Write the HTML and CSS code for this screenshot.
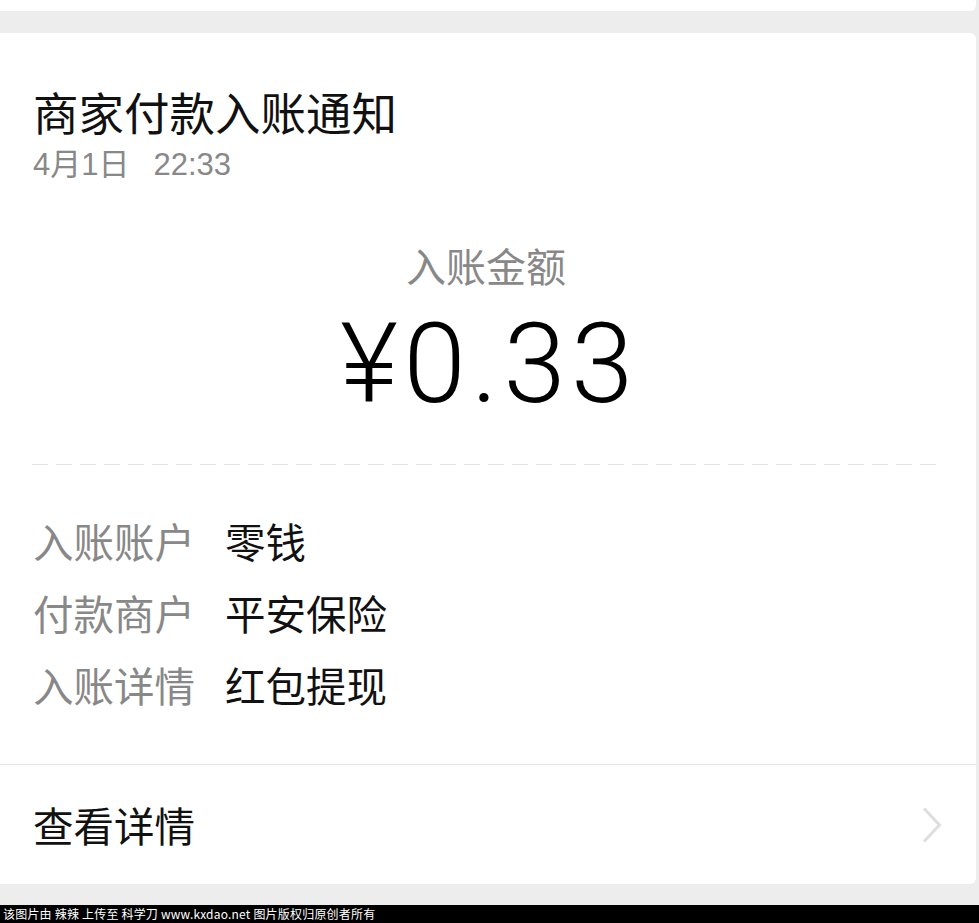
FILE: index.html
```html
<!DOCTYPE html>
<html lang="zh-CN">
<head>
  <meta charset="UTF-8" />
  <meta name="viewport" content="width=device-width, initial-scale=1.0"/>
  <title>商家付款入账通知</title>
  <link rel="stylesheet" href="styles.css">
</head>
<body>
  <div class="prev-card"></div>

  <div class="card">
    <h1 class="title">商家付款入账通知</h1>
    <div class="date">4月1日<span class="time">22:33</span></div>

    <div class="amount-label">入账金额</div>
    <div class="amount">¥0.33</div>

    <div class="dashed"></div>

    <div class="rows">
      <div class="row"><span class="label">入账账户</span><span class="value">零钱</span></div>
      <div class="row"><span class="label">付款商户</span><span class="value">平安保险</span></div>
      <div class="row"><span class="label">入账详情</span><span class="value">红包提现</span></div>
    </div>

    <div class="footer">
      <span>查看详情</span>
      <svg class="chevron" width="20" height="36" viewBox="0 0 20 36">
        <polyline points="2,1.5 17.5,18 2,34.5" fill="none" stroke="#dedede" stroke-width="3" />
      </svg>
    </div>
  </div>

  <div class="watermark">该图片由 辣辣 上传至 科学刀 www.kxdao.net 图片版权归原创者所有</div>
</body>
</html>
```

FILE: styles.css
```css
body {
  margin: 0;
  background-color: #ededed;
  font-family: "Noto Sans CJK SC", "Liberation Sans", sans-serif;
  color: #111;
}
.prev-card {
  height: 11px;
  width: calc(100% - 3px);
  background-color: #fff;
  border-bottom-right-radius: 6px;
}
.card {
  margin-top: 22px;
  width: calc(100% - 3px);
  height: 851px;
  background-color: #fff;
  border-radius: 0 6px 6px 0;
  display: flex;
  flex-direction: column;
}
.title {
  margin: 51px 0 0 33px;
  font-size: 45.5px;
  font-weight: normal;
  line-height: 54px;
}
.date {
  margin: 7px 0 0 33px;
  font-family: "Liberation Sans", "Noto Sans CJK SC", sans-serif;
  font-size: 31px;
  line-height: 40px;
  color: #888;
}
.time {
  margin-left: 24px;
}
.amount-label {
  margin-top: 55px;
  text-align: center;
  font-size: 40px;
  line-height: 50px;
  color: #888;
  padding-right: 4px;
}
.amount {
  margin-top: 14px;
  text-align: center;
  font-family: "Roboto", "Liberation Sans", sans-serif;
  font-weight: 300;
  font-size: 112px;
  line-height: 120px;
  letter-spacing: 5.5px;
  padding-left: 3px;
  color: #000;
}
.dashed {
  margin: 40px 37px 0 32px;
  height: 1px;
  background-image: repeating-linear-gradient(to right, #e3e3e3 0 16px, transparent 16px 24px);
}
.rows {
  margin-top: 40px;
  padding-left: 33px;
}
.row {
  display: flex;
  font-size: 40.5px;
  line-height: 72px;
}
.label {
  width: 192px;
  color: #888;
}
.value {
  color: #111;
}
.footer {
  margin-top: auto;
  height: 119px;
  border-top: 1px solid #e5e5e5;
  display: flex;
  align-items: center;
  justify-content: space-between;
  padding: 0 34px 0 33px;
  font-size: 40.5px;
}
.chevron {
  display: block;
}
.watermark {
  margin-top: 21px;
  height: 18px;
  background-color: #000;
  color: #fff;
  font-size: 12px;
  line-height: 18px;
  padding-left: 3px;
  letter-spacing: 0.2px;
  white-space: nowrap;
  overflow: hidden;
}
```
